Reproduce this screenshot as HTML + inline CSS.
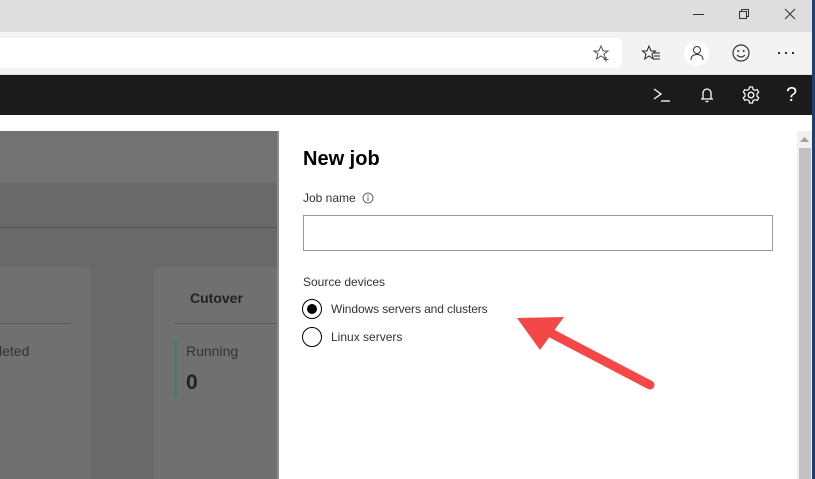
<!DOCTYPE html>
<html><head><meta charset="utf-8"><style>
*{margin:0;padding:0;box-sizing:border-box}
body{width:815px;height:479px;overflow:hidden;position:relative;font-family:"Liberation Sans",sans-serif;background:#fff}
.a{position:absolute}
</style></head><body>
<div class="a" style="left:0;top:0;width:815px;height:32px;background:#dedede"></div>
<div class="a" style="left:693px;top:14px;width:11px;height:1px;background:#333"></div>
<svg class="a" style="left:738px;top:8px" width="12" height="12"><rect x="1.5" y="3.5" width="7" height="7" fill="none" stroke="#333"/><path d="M3.5 3.5V1.5H10.5V8.5H8.5" fill="none" stroke="#333"/></svg>
<svg class="a" style="left:784px;top:8px" width="12" height="12"><path d="M1 1L11 11M11 1L1 11" stroke="#333"/></svg>
<div class="a" style="left:0;top:32px;width:815px;height:43px;background:#f3f3f3;border-bottom:1px solid #e0e0e0"></div>
<div class="a" style="left:0;top:38px;width:622px;height:30px;background:#fff;border-radius:0 4px 4px 0"></div>
<svg class="a" style="left:592px;top:44px" width="20" height="18"><path d="M9 2L11.2 7H16L12 10L13.5 15L9 12L4.5 15L6 10L2 7H6.8Z" fill="none" stroke="#555"/><path d="M14 13V18M11.5 15.5H16.5" stroke="#555"/></svg>
<svg class="a" style="left:641px;top:44px" width="22" height="18"><path d="M8 2L10 7H14.5L11 10L12.3 15L8 12L3.7 15L5 10L1.5 7H6Z" fill="none" stroke="#222"/><path d="M12 9H19M13 12H19M13 15H19" stroke="#222"/></svg>
<div class="a" style="left:684px;top:41px;width:25px;height:25px;border-radius:50%;background:#fff"></div>
<svg class="a" style="left:688px;top:44px" width="18" height="18"><circle cx="9" cy="6" r="3.5" fill="none" stroke="#333"/><path d="M3 16C3 12 5.5 10.5 9 10.5S15 12 15 16" fill="none" stroke="#333"/></svg>
<svg class="a" style="left:731px;top:43px" width="20" height="20"><circle cx="10" cy="10" r="8" fill="none" stroke="#333" stroke-width="1.2"/><circle cx="7.3" cy="8" r="1" fill="#333"/><circle cx="12.7" cy="8" r="1" fill="#333"/><path d="M6 12Q10 16 14 12" fill="none" stroke="#333" stroke-width="1.2"/></svg>
<div class="a" style="left:778px;top:52px;width:2px;height:2px;background:#333;box-shadow:7px 0 #333,14px 0 #333"></div>
<div class="a" style="left:0;top:75px;width:815px;height:40px;background:#1b1b1b"></div>
<svg class="a" style="left:652px;top:86px" width="20" height="18"><path d="M2 3L9 8L2 13" fill="none" stroke="#fff" stroke-width="1.3"/><path d="M9 15H18" stroke="#fff" stroke-width="1.3"/></svg>
<svg class="a" style="left:699px;top:86px" width="16" height="18"><path d="M4 13V7A4 4 0 0 1 12 7V13M2 13H14M6.5 15.5H9.5" fill="none" stroke="#fff" stroke-width="1.3"/></svg>
<svg class="a" style="left:741px;top:85px" width="20" height="20"><circle cx="10" cy="10" r="2.8" fill="none" stroke="#fff" stroke-width="1.3"/><path d="M8.5 2H11.5L12 4.3L14 5.4L16.2 4.6L17.7 7.2L16 8.8V11.2L17.7 12.8L16.2 15.4L14 14.6L12 15.7L11.5 18H8.5L8 15.7L6 14.6L3.8 15.4L2.3 12.8L4 11.2V8.8L2.3 7.2L3.8 4.6L6 5.4L8 4.3Z" fill="none" stroke="#fff" stroke-width="1.2"/></svg>
<div class="a" style="left:786px;top:84px;color:#fff;font-size:20px">?</div>
<div class="a" style="left:0;top:131px;width:278px;height:52px;background:#727272"></div>
<div class="a" style="left:0;top:183px;width:278px;height:296px;background:#696969"></div>
<div class="a" style="left:0;top:227px;width:278px;height:1px;background:#555"></div>
<div class="a" style="left:0;top:267px;width:90px;height:212px;background:#707070;border-radius:0 4px 0 0"></div>
<div class="a" style="left:0;top:323px;width:70px;height:1px;background:#5a5a5a"></div>
<div class="a" style="left:-1px;top:343px;color:#333;font-size:14px">leted</div>
<div class="a" style="left:154px;top:267px;width:124px;height:212px;background:#707070;border-radius:4px 0 0 0"></div>
<div class="a" style="left:190px;top:290px;color:#222;font-size:14px;font-weight:bold">Cutover</div>
<div class="a" style="left:174px;top:323px;width:104px;height:1px;background:#5a5a5a"></div>
<div class="a" style="left:174px;top:341px;width:3px;height:56px;background:#4a7a70"></div>
<div class="a" style="left:186px;top:343px;color:#333;font-size:14px">Running</div>
<div class="a" style="left:186px;top:371px;color:#222;font-size:21px;font-weight:bold">0</div>
<div class="a" style="left:277px;top:131px;width:2px;height:348px;background:#8a8a8a"></div>
<div class="a" style="left:303px;top:148px;font-size:20px;font-weight:bold;color:#000">New job</div>
<div class="a" style="left:303px;top:191px;font-size:12px;color:#333">Job name</div>
<svg class="a" style="left:362px;top:192px" width="12" height="12"><circle cx="6" cy="6" r="5" fill="none" stroke="#666"/><path d="M6 5V9" stroke="#666"/><circle cx="6" cy="3.4" r=".7" fill="#666"/></svg>
<div class="a" style="left:303px;top:215px;width:470px;height:36px;border:1px solid #999"></div>
<div class="a" style="left:303px;top:275px;font-size:12px;color:#333">Source devices</div>
<div class="a" style="left:302px;top:299px;width:20px;height:20px;border:1.5px solid #000;border-radius:50%"></div>
<div class="a" style="left:307px;top:304px;width:10px;height:10px;background:#000;border-radius:50%"></div>
<div class="a" style="left:331px;top:302px;font-size:12px;color:#333;letter-spacing:-0.1px">Windows servers and clusters</div>
<div class="a" style="left:302px;top:327px;width:20px;height:20px;border:1.5px solid #000;border-radius:50%"></div>
<div class="a" style="left:331px;top:330px;font-size:12px;color:#333">Linux servers</div>
<svg class="a" style="left:500px;top:300px" width="170" height="100"><path d="M150 85L45 30" stroke="#f44848" stroke-width="9" stroke-linecap="round"/><path d="M17 18L64 17L40 50Z" fill="#f44848"/></svg>
<div class="a" style="left:797px;top:131px;width:15px;height:348px;background:#f0f0f0"></div>
<svg class="a" style="left:800px;top:137px" width="9" height="6"><path d="M0 5L4.5 0L9 5Z" fill="#a0a0a0"/></svg>
<div class="a" style="left:799px;top:148px;width:12px;height:331px;background:#c1c1c1"></div>
<div class="a" style="left:812px;top:0;width:3px;height:479px;background:#1f3f73"></div>
</body></html>
